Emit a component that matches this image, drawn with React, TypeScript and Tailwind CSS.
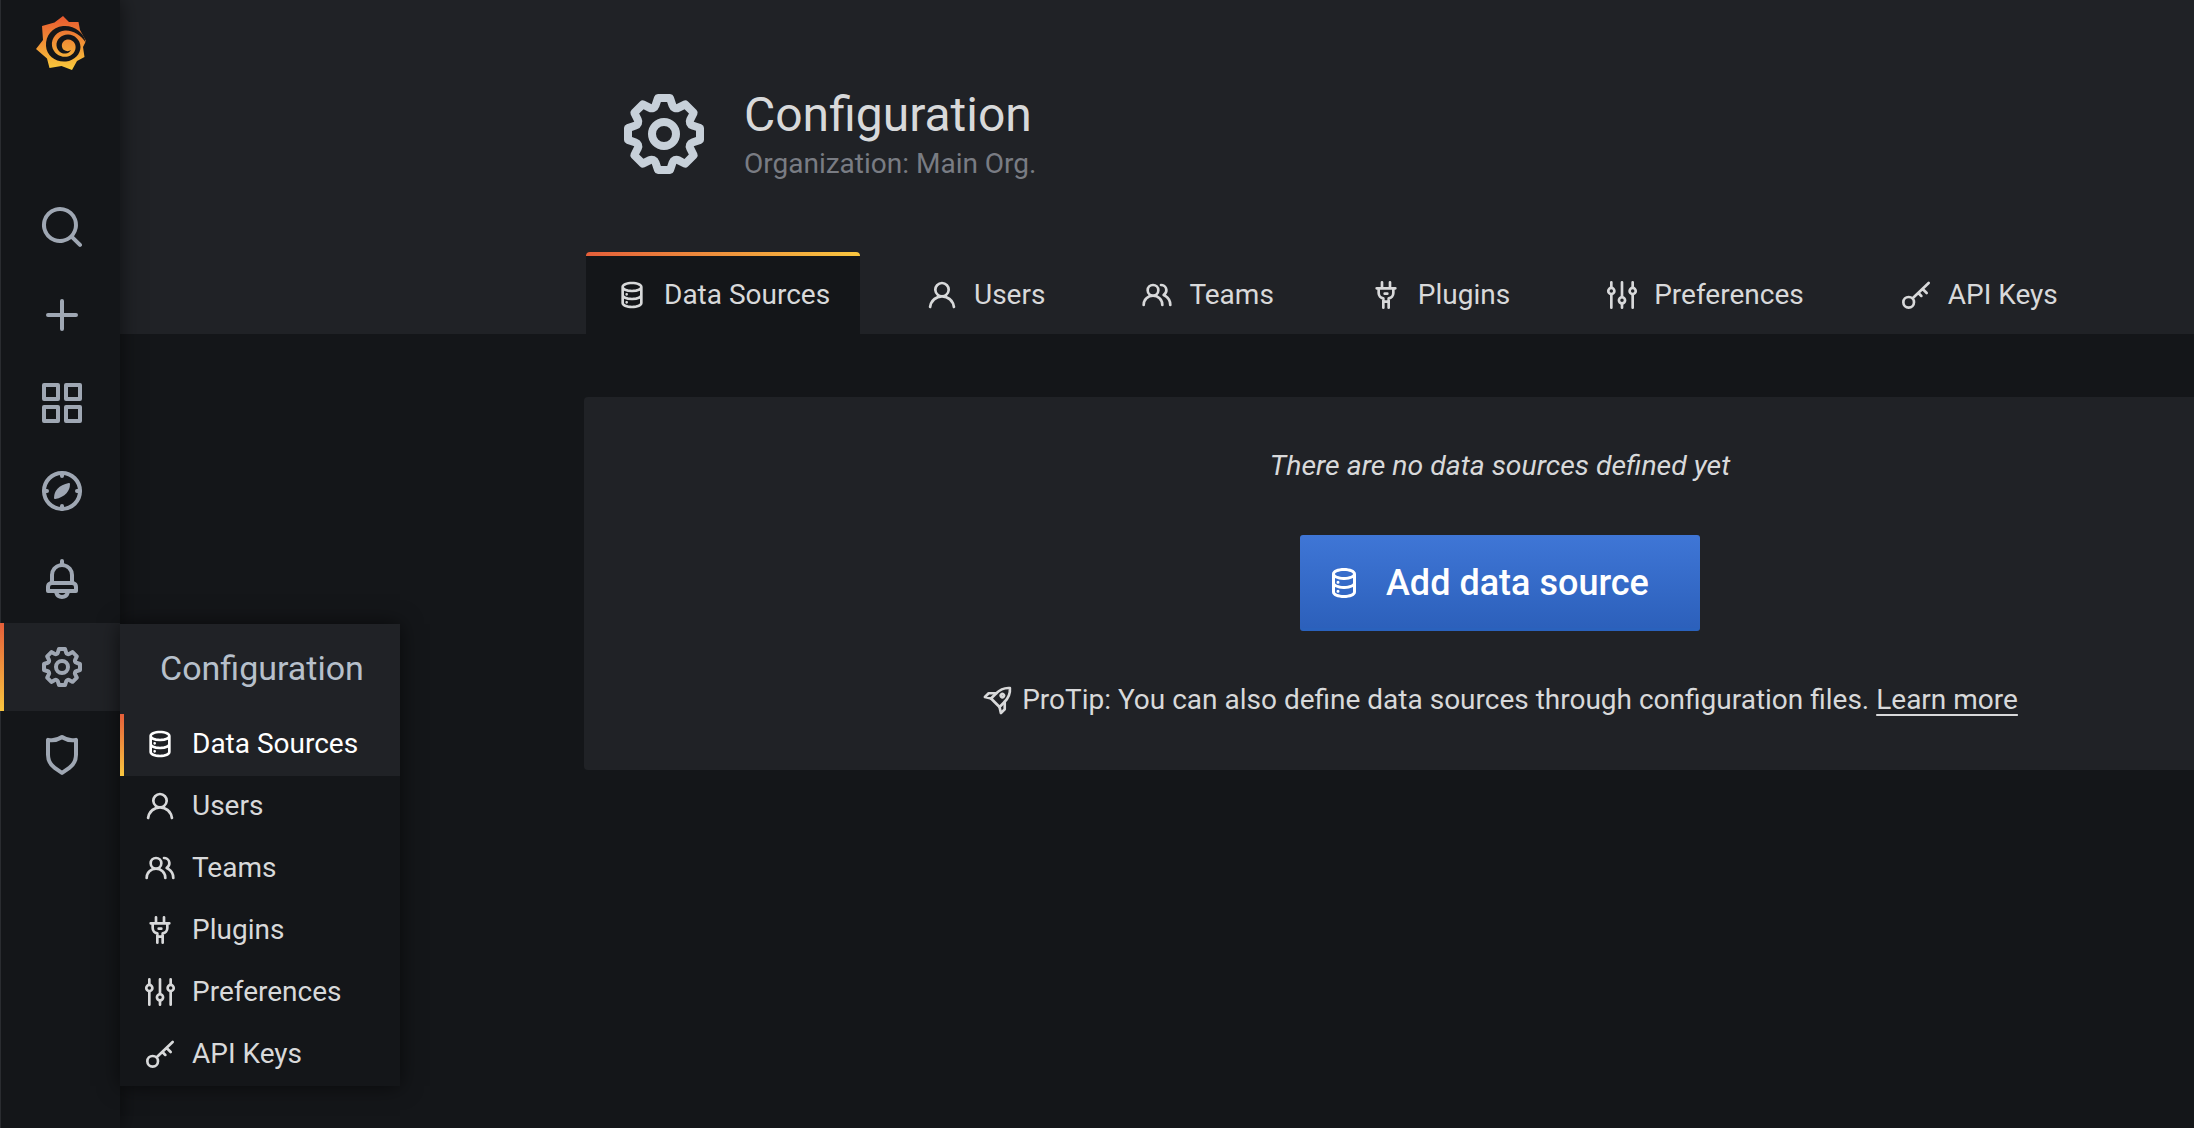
import type { ReactNode } from "react"

const cog = "M21.32,9.55l-1.89-.63.89-1.78A1,1,0,0,0,20.13,6L18,3.87a1,1,0,0,0-1.15-.19l-1.78.89-.63-1.89A1,1,0,0,0,13.5,2h-3a1,1,0,0,0-.95.68L8.92,4.57,7.14,3.68A1,1,0,0,0,6,3.87L3.87,6a1,1,0,0,0-.19,1.15l.89,1.78-1.89.63A1,1,0,0,0,2,10.5v3a1,1,0,0,0,.68.95l1.89.63-.89,1.78A1,1,0,0,0,3.87,18L6,20.13a1,1,0,0,0,1.15.19l1.78-.89.63,1.89a1,1,0,0,0,.95.68h3a1,1,0,0,0,.95-.68l.63-1.89,1.78.89A1,1,0,0,0,18,20.13L20.13,18a1,1,0,0,0,.19-1.15l-.89-1.78,1.89-.63A1,1,0,0,0,22,13.5v-3A1,1,0,0,0,21.32,9.55ZM20,12.78l-1.2.4A2,2,0,0,0,17.64,16l.57,1.14-1.1,1.1L16,17.64a2,2,0,0,0-2.79,1.16l-.4,1.2H11.22l-.4-1.2A2,2,0,0,0,8,17.64l-1.14.57-1.1-1.1L6.36,16A2,2,0,0,0,5.2,13.18L4,12.78V11.22l1.2-.4A2,2,0,0,0,6.36,8L5.79,6.89l1.1-1.1L8,6.36A2,2,0,0,0,10.82,5.2l.4-1.2h1.56l.4,1.2A2,2,0,0,0,16,6.36l1.14-.57,1.1,1.1L17.64,8a2,2,0,0,0,1.16,2.79l1.2.4ZM12,8a4,4,0,1,0,4,4A4,4,0,0,0,12,8Zm0,6a2,2,0,1,1,2-2A2,2,0,0,1,12,14Z"
const search = "M21.71,20.29,18,16.61A9,9,0,1,0,16.61,18l3.68,3.68a1,1,0,0,0,1.42,0A1,1,0,0,0,21.71,20.29ZM11,18a7,7,0,1,1,7-7A7,7,0,0,1,11,18Z"
const plus = "M19,11H13V5a1,1,0,0,0-2,0v6H5a1,1,0,0,0,0,2h6v6a1,1,0,0,0,2,0V13h6a1,1,0,0,0,0-2Z"
const apps = "M10,13H3a1,1,0,0,0-1,1v7a1,1,0,0,0,1,1h7a1,1,0,0,0,1-1V14A1,1,0,0,0,10,13ZM9,20H4V15H9ZM21,2H14a1,1,0,0,0-1,1v7a1,1,0,0,0,1,1h7a1,1,0,0,0,1-1V3A1,1,0,0,0,21,2ZM20,9H15V4h5Zm1,4H14a1,1,0,0,0-1,1v7a1,1,0,0,0,1,1h7a1,1,0,0,0,1-1V14A1,1,0,0,0,21,13Zm-1,7H15V15h5ZM10,2H3A1,1,0,0,0,2,3v7a1,1,0,0,0,1,1h7a1,1,0,0,0,1-1V3A1,1,0,0,0,10,2ZM9,9H4V4H9Z"
const bell = "M18,13.18V10a6,6,0,0,0-5-5.91V3a1,1,0,0,0-2,0V4.09A6,6,0,0,0,6,10v3.18A3,3,0,0,0,4,16v2a1,1,0,0,0,1,1H8.14a4,4,0,0,0,7.72,0H19a1,1,0,0,0,1-1V16A3,3,0,0,0,18,13.18ZM8,10a4,4,0,0,1,8,0v3H8Zm4,10a2,2,0,0,1-1.72-1h3.44A2,2,0,0,1,12,20Zm6-3H6V16a1,1,0,0,1,1-1H17a1,1,0,0,1,1,1Z"
const shield = "M19.63,3.65a1,1,0,0,0-.84-.2,8,8,0,0,1-6.22-1.27,1,1,0,0,0-1.14,0A8,8,0,0,1,5.21,3.45a1,1,0,0,0-.84.2A1,1,0,0,0,4,4.43v7.45a9,9,0,0,0,3.77,7.33l3.65,2.6a1,1,0,0,0,1.16,0l3.65-2.6A9,9,0,0,0,20,11.88V4.43A1,1,0,0,0,19.63,3.65ZM18,11.88a7,7,0,0,1-2.93,5.7L12,19.77,8.93,17.58A7,7,0,0,1,6,11.88V5.58a10,10,0,0,0,6-1.39,10,10,0,0,0,6,1.39Z"
const user = "M15.71,12.71a6,6,0,1,0-7.42,0,10,10,0,0,0-6.22,8.18,1,1,0,0,0,2,.22,8,8,0,0,1,15.9,0,1,1,0,0,0,1,.89h.11a1,1,0,0,0,.88-1.1A10,10,0,0,0,15.71,12.71ZM12,12a4,4,0,1,1,4-4A4,4,0,0,1,12,12Z"
const users = "M12.3,12.22A4.92,4.92,0,0,0,14,8.5a5,5,0,0,0-10,0,4.92,4.92,0,0,0,1.7,3.72A8,8,0,0,0,1,19.5a1,1,0,0,0,2,0,6,6,0,0,1,12,0,1,1,0,0,0,2,0A8,8,0,0,0,12.3,12.22ZM9,11.5a3,3,0,1,1,3-3A3,3,0,0,1,9,11.5Zm9.74.32A5,5,0,0,0,15,3.5a1,1,0,0,0,0,2,3,3,0,0,1,3,3,3,3,0,0,1-1.5,2.59,1,1,0,0,0-.5.84,1,1,0,0,0,.45.86l.39.26.13.07a7,7,0,0,1,4,6.38,1,1,0,0,0,2,0A9,9,0,0,0,18.74,11.82Z"
const database = "M8,16.5a1,1,0,1,0,1,1A1,1,0,0,0,8,16.5ZM12,2C8,2,4,3.37,4,6V18c0,2.63,4,4,8,4s8-1.37,8-4V6C20,3.37,16,2,12,2Zm6,16c0,.71-2.28,2-6,2s-6-1.29-6-2V14.73A13.16,13.16,0,0,0,12,16a13.16,13.16,0,0,0,6-1.27Zm0-6c0,.71-2.28,2-6,2s-6-1.29-6-2V8.73A13.16,13.16,0,0,0,12,10a13.16,13.16,0,0,0,6-1.27ZM12,8C8.28,8,6,6.71,6,6s2.28-2,6-2,6,1.29,6,2S15.72,8,12,8ZM8,10.5a1,1,0,1,0,1,1A1,1,0,0,0,8,10.5Z"

const Icon = ({ d, className }: { d: string; className: string }) => (
  <svg viewBox="0 0 24 24" fill="currentColor" className={className}><path d={d} /></svg>
)

const Compass = ({ className }: { className: string }) => (
  <svg viewBox="0 0 24 24" fill="none" stroke="currentColor" strokeWidth="2" strokeLinecap="round" className={className}>
    <circle cx="12" cy="12" r="9" />
    <path d="M12 3v1.5M12 19.5V21M3 12h1.5M19.5 12H21" />
    <path d="M15.5 8.5c0 3-2 6-7 7 0-3 2-6 7-7z" fill="currentColor" strokeWidth="1" strokeLinejoin="round" />
  </svg>
)

const Plug = ({ className }: { className: string }) => (
  <svg viewBox="0 0 24 24" fill="none" stroke="currentColor" strokeWidth="2" strokeLinecap="round" strokeLinejoin="round" className={className}>
    <path d="M9 2.5V7M15 2.5V7M5 7h14" />
    <path d="M6.5 7v3.5a4 4 0 0 0 3.5 4V17h4v-2.5a4 4 0 0 0 3.5-4V7" />
    <path d="M10 17v4.5M14 17v4.5M11 11h2" />
  </svg>
)

const Sliders = ({ className }: { className: string }) => (
  <svg viewBox="0 0 24 24" fill="none" stroke="currentColor" strokeWidth="2" strokeLinecap="round" className={className}>
    <path d="M4 2.5v4M4 11.5v10M12 2.5v11M12 18.5v3M20 2.5v4M20 11.5v10" />
    <circle cx="4" cy="9" r="2.3" />
    <circle cx="12" cy="16" r="2.3" />
    <circle cx="20" cy="9" r="2.3" />
  </svg>
)

const Key = ({ className }: { className: string }) => (
  <svg viewBox="0 0 24 24" fill="none" stroke="currentColor" strokeWidth="2" strokeLinecap="round" className={className}>
    <circle cx="6.5" cy="17.5" r="4" />
    <path d="M9.5 14.5L21.5 3M17 7.5l3 3M13.8 10.5l2.2 2.2" />
  </svg>
)

// drawn nose-up, then turned to point at the top right
const Rocket = ({ className }: { className: string }) => (
  <svg viewBox="0 0 24 24" fill="none" stroke="currentColor" strokeWidth="2" strokeLinecap="round" strokeLinejoin="round" className={className}>
    <g transform="translate(1.5 -1.5) rotate(45 12 12)">
      <path d="M12 1.5C9 4 7.5 8 7.5 12V17H16.5V12C16.5 8 15 4 12 1.5Z" />
      <path d="M7.5 11.5L3.5 15.5V19.5L7.5 17M16.5 11.5L20.5 15.5V19.5L16.5 17" />
      <circle cx="12" cy="9.5" r="1.2" />
    </g>
  </svg>
)

// gear silhouette + spiral, no package has this one
const Logo = () => (
  <svg viewBox="0 0 50 54" className="h-[54px] w-[50px]">
    <defs>
      <linearGradient id="logo-fill" x1="0" y1="0" x2="0" y2="1">
        <stop offset="0" stopColor="#e8582f" />
        <stop offset="1" stopColor="#f9cb3c" />
      </linearGradient>
    </defs>
    <path
      fill="url(#logo-fill)"
      d="M27 0L33 6L42.5 6L44 14L50 25L47 31L48.5 41L41 45L36 54L25.5 50L13.5 52L11 42.5L0 33L7 24L6 10L18.5 6.5Z"
    />
    <path
      fill="#141619"
      d="M50 27C48 16 38 9 27 10C16 11 9.5 20 10 30C10.5 40 20 46.5 30 45.5C38.5 44.5 44.5 38 44.5 31C44.5 24 38.5 18.5 32 18.5C25 18.5 20 24 20.5 29.5C21 34.5 25 38 29.5 37.5C32 37.3 34 36 35 34C33 35.5 30 35.5 28 34C25.5 32 25 28 27.5 25.5C31 22 37 23.5 39 28C41 33 38 39 32 40.5C25 42 17.5 38 16 30C15 22 21 15 29 14.5C37 14 45 19 50 27Z"
    />
  </svg>
)

const BAR_V = "bg-[linear-gradient(180deg,#e55f3a,#f9c63f)]"
const NAV_ROW = "flex h-[88px] items-center justify-center pl-[3px] text-[#9fa7b3]"

const sections: [ReactNode, string][] = [
  [<Icon d={user} className="size-8" />, "Users"],
  [<Icon d={users} className="size-8" />, "Teams"],
  [<Plug className="size-8" />, "Plugins"],
  [<Sliders className="size-8" />, "Preferences"],
  [<Key className="size-8" />, "API Keys"],
]

export default function App() {
  return (
    <div className="relative flex h-[1128px] w-[2194px] overflow-hidden bg-[#141619] font-['Roboto',sans-serif] text-[#c7d0d9]">
      <nav className="relative z-10 flex h-full w-[120px] shrink-0 flex-col border-l border-[#2a2c30] bg-[#141619] shadow-[0_0_20px_rgba(0,0,0,0.55)]">
        <div className="flex h-[183px] justify-center pt-[16px]">
          <Logo />
        </div>
        {[search, plus, apps].map((d) => (
          <div key={d} className={NAV_ROW}>
            <Icon d={d} className="size-12" />
          </div>
        ))}
        <div className={NAV_ROW}>
          <Compass className="size-12" />
        </div>
        <div className={NAV_ROW}>
          <Icon d={bell} className="size-12" />
        </div>
        <div className={`relative bg-[#202226] ${NAV_ROW}`}>
          <div className={`absolute -left-px top-0 h-full w-1 ${BAR_V}`} />
          <Icon d={cog} className="size-12" />
        </div>
        <div className={NAV_ROW}>
          <Icon d={shield} className="size-12" />
        </div>
      </nav>

      {/* flyout over the page, next to the active nav item */}
      <div className="absolute left-[120px] top-[624px] z-20 w-[280px] bg-[#141619] shadow-[0_0_20px_rgba(0,0,0,0.6)]">
        <div className="flex h-[90px] items-center bg-[#202226] pb-[2px] pl-[40px] text-[34px] text-[#b7c0cb]">Configuration</div>
        <div className="relative flex h-[62px] items-center gap-[16px] bg-[#202226] pb-[2px] pl-[24px] text-[28px] text-white">
          <div className={`absolute left-0 top-0 h-full w-1 ${BAR_V}`} />
          <Icon d={database} className="size-8" />
          Data Sources
        </div>
        {sections.map(([icon, label]) => (
          <div key={label} className="flex h-[62px] items-center gap-[16px] pb-[2px] pl-[24px] text-[28px] text-[#d8d9da]">
            {icon}
            {label}
          </div>
        ))}
      </div>

      <main className="min-w-0 flex-1">
        <header className="h-[334px] bg-[#202226] pl-[466px]">
          <div className="flex items-center gap-[32px] pl-[30px] pt-[86px]">
            <Icon d={cog} className="size-[96px] shrink-0 text-[#c7d0d9]" />
            <div>
              <h1 className="text-[48px] leading-[54px] text-[#d8d9da]">Configuration</h1>
              <p className="mt-[5px] text-[28px] leading-[34px] text-[#797c83]">Organization: Main Org.</p>
            </div>
          </div>
          <div className="mt-[70px] flex h-[82px] gap-[32px] text-[28px] text-[#d8d9da]">
            <div className="mr-[2px] flex w-[274px] flex-col rounded-t-[4px] bg-[#141619]">
              <div className="h-1 rounded-t-[4px] bg-[linear-gradient(90deg,#e55f3a,#f9c63f)]" />
              <div className="flex flex-1 items-center gap-[16px] pl-[30px]">
                <Icon d={database} className="size-8" />
                Data Sources
              </div>
            </div>
            {sections.map(([icon, label]) => (
              <div key={label} className="flex items-center gap-[16px] px-[32px] pt-1">
                {icon}
                {label}
              </div>
            ))}
          </div>
        </header>

        {/* panel runs past the right edge of the window */}
        <section className="ml-[464px] mt-[63px] flex h-[373px] w-[1832px] flex-col items-center rounded-l-[4px] bg-[#202226] pt-[51px]">
          <p className="text-[28.4px] italic leading-[36px] text-[#d8d9da]">There are no data sources defined yet</p>
          <button className="mt-[51px] flex h-[96px] w-[400px] shrink-0 items-center gap-[24px] rounded-[3px] border-b-[3px] border-[#2a62bd] bg-[linear-gradient(180deg,#3f76d6,#2c60bb)] pl-[26px] pt-[2px] text-[36px] font-medium text-white">
            <Icon d={database} className="size-9" />
            Add data source
          </button>
          <p className="mt-[51px] flex items-center gap-[8px] text-[28px] leading-[36px] text-[#d8d9da]">
            <Rocket className="size-8" />
            <span>
              ProTip: You can also define data sources through configuration files.{" "}
              <span className="underline underline-offset-[5px]">Learn more</span>
            </span>
          </p>
        </section>
      </main>
    </div>
  )
}
